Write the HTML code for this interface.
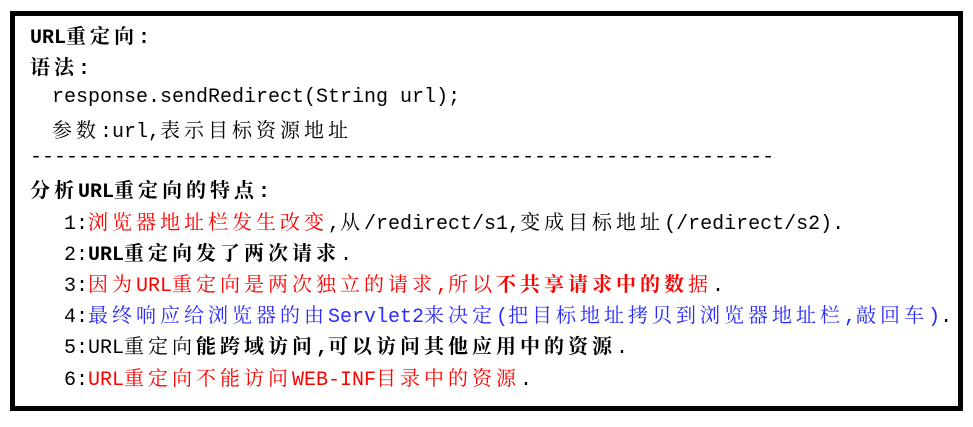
<!DOCTYPE html>
<html><head><meta charset="utf-8"><style>
html,body{margin:0;padding:0;background:#fff;width:973px;height:427px;overflow:hidden}
.box{position:absolute;left:10px;top:11px;width:943px;height:390px;border:5px solid #000;background:#fff}
.l{position:absolute;white-space:pre;font-family:"Liberation Mono",monospace;font-size:20px;line-height:24px;color:#000}
.l i{font-style:normal;font-family:"Noto Serif CJK SC","Noto Sans CJK SC",serif;font-size:20px;letter-spacing:4px}
.r{color:#ff0000}.bl{color:#2a2aff}
b{font-weight:bold}
</style></head><body>
<div class="box"></div>
<div class="l" style="left:30px;top:23px"><b>URL<i>重定向</i>:</b></div>
<div class="l" style="left:30px;top:54px"><b><i>语法</i>:</b></div>
<div class="l" style="left:52px;top:86px">response.sendRedirect(String url);</div>
<div class="l" style="left:52px;top:117px"><i>参数</i>:url,<i>表示目标资源地址</i></div>
<div class="l" style="left:30px;top:146px">--------------------------------------------------------------</div>
<div class="l" style="left:30px;top:177px"><b><i>分析</i>URL<i>重定向的特点</i>:</b></div>
<div class="l" style="left:64px;top:209px">1:<span class="r"><i>浏览器地址栏发生改变</i></span>,<i>从</i>/redirect/s1,<i>变成目标地址</i>(/redirect/s2).</div>
<div class="l" style="left:64px;top:240px">2:<b>URL<i>重定向发了两次请求</i></b>.</div>
<div class="l" style="left:64px;top:271px">3:<span class="r"><i>因为</i>URL<i>重定向是两次独立的请求</i>,<i>所以</i><b><i>不共享请求中的数</i></b><i>据</i></span>.</div>
<div class="l" style="left:64px;top:302px">4:<span class="bl"><i>最终响应给浏览器的由</i>Servlet2<i>来决定</i>(<i>把目标地址拷贝到浏览器地址栏</i>,<i>敲回车</i>)</span>.</div>
<div class="l" style="left:64px;top:333px">5:URL<i>重定向</i><b><i>能跨域访问</i>,<i>可以访问其他应用中的资源</i></b>.</div>
<div class="l" style="left:64px;top:365px">6:<span class="r">URL<i>重定向不能访问</i>WEB-INF<i>目录中的资源</i></span>.</div>
</body></html>
